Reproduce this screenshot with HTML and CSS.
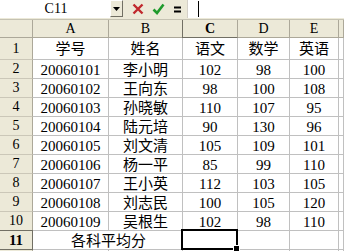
FILE: index.html
```html
<!DOCTYPE html>
<html lang="zh-CN">
<head>
<meta charset="utf-8">
<title>Excel</title>
<link rel="stylesheet" href="styles.css">
</head>
<body>
<div class="app">
  <div class="fbar">
    <div class="namebox">C11</div>
    <div class="dd"><svg width="7" height="4" viewBox="0 0 7 4"><path d="M0 0H7L3.5 4Z" fill="#000"/></svg></div>
    <div class="btns">
      <svg class="ico-x" width="12" height="12" viewBox="0 0 12 12"><path d="M1.5 1.5L10.5 10.5M10.5 1.5L1.5 10.5" stroke="#c0282d" stroke-width="2.4" fill="none"/></svg>
      <svg class="ico-ok" width="13" height="12" viewBox="0 0 13 12"><path d="M1.5 6.5L5 10L11.5 1.5" stroke="#1f9a2c" stroke-width="2.6" fill="none"/></svg>
      <svg class="ico-eq" width="7" height="7" viewBox="0 0 7 7"><rect x="0" y="0.5" width="7" height="2" fill="#000"/><rect x="0" y="4.5" width="7" height="2" fill="#000"/></svg>
    </div>
    <div class="finput"><span class="caret"></span></div>
  </div>
  <div class="sheet">
    <div class="h corner"></div><div class="h">A</div><div class="h">B</div><div class="h selcol">C</div><div class="h">D</div><div class="h">E</div><div class="h last"></div>

    <div class="rh">1</div><div class="c">学号</div><div class="c">姓名</div><div class="c">语文</div><div class="c">数学</div><div class="c">英语</div><div class="c"></div>
    <div class="rh">2</div><div class="c">20060101</div><div class="c">李小明</div><div class="c">102</div><div class="c">98</div><div class="c">100</div><div class="c"></div>
    <div class="rh">3</div><div class="c">20060102</div><div class="c">王向东</div><div class="c">98</div><div class="c">100</div><div class="c">108</div><div class="c"></div>
    <div class="rh">4</div><div class="c">20060103</div><div class="c">孙晓敏</div><div class="c">110</div><div class="c">107</div><div class="c">95</div><div class="c"></div>
    <div class="rh">5</div><div class="c">20060104</div><div class="c">陆元培</div><div class="c">90</div><div class="c">130</div><div class="c">96</div><div class="c"></div>
    <div class="rh">6</div><div class="c">20060105</div><div class="c">刘文清</div><div class="c">105</div><div class="c">109</div><div class="c">101</div><div class="c"></div>
    <div class="rh">7</div><div class="c">20060106</div><div class="c">杨一平</div><div class="c">85</div><div class="c">99</div><div class="c">110</div><div class="c"></div>
    <div class="rh">8</div><div class="c">20060107</div><div class="c">王小英</div><div class="c">112</div><div class="c">103</div><div class="c">105</div><div class="c"></div>
    <div class="rh">9</div><div class="c">20060108</div><div class="c">刘志民</div><div class="c">100</div><div class="c">105</div><div class="c">120</div><div class="c"></div>
    <div class="rh">10</div><div class="c">20060109</div><div class="c">吴根生</div><div class="c">102</div><div class="c">98</div><div class="c">110</div><div class="c"></div>
    <div class="rh selrow">11</div><div class="c merged">各科平均分</div><div class="c active"><span class="handle"></span></div><div class="c"></div><div class="c"></div><div class="c"></div>
    <div class="rh"></div><div class="c"></div><div class="c"></div><div class="c"></div><div class="c"></div><div class="c"></div><div class="c"></div>
  </div>
</div>
</body>
</html>
```
FILE: styles.css
```css
html, body {
  margin: 0;
  padding: 0;
  background: #ffffff;
}
body {
  font-family: "Liberation Serif", "Noto Sans CJK SC", serif;
  color: #000;
}
.app {
  width: 344px;
  height: 251px;
  overflow: hidden;
}
.fbar {
  display: flex;
  height: 19px;
  background: #ece9d8;
  box-sizing: border-box;
}
.namebox {
  width: 110px;
  height: 18px;
  background: #fff;
  font-size: 14px;
  line-height: 18px;
  text-align: center;
  box-sizing: border-box;
  padding-left: 2px;
}
.dd {
  width: 13px;
  height: 17px;
  box-sizing: border-box;
  background: #ece9d8;
  border-top: 1px solid #fff;
  border-left: 1px solid #fff;
  border-right: 1px solid #716f64;
  border-bottom: 1px solid #716f64;
  display: flex;
  align-items: center;
  justify-content: center;
}
.btns {
  width: 64px;
  display: flex;
  align-items: center;
  height: 18px;
}
.ico-x { margin-left: 9px; }
.ico-ok { margin-left: 8px; }
.ico-eq { margin-left: 9px; }
.finput {
  flex: 1;
  height: 18px;
  background: #fff;
  border-left: 1px solid #d4d0c8;
  position: relative;
}
.caret {
  position: absolute;
  left: 10px;
  top: 1px;
  width: 1px;
  height: 16px;
  background: #000;
}
.sheet {
  display: grid;
  grid-template-columns: 33px 76px 74px 55px 52px 49px 5px;
  grid-template-rows: 18px 22px repeat(9, 19px) 19px 19px;
  border-top: 1px solid #c5c2b2;
}
.sheet > div {
  box-sizing: border-box;
  border-right: 1px solid #c0c0c0;
  border-bottom: 1px solid #c0c0c0;
  display: flex;
  align-items: center;
  justify-content: center;
  overflow: hidden;
  white-space: nowrap;
}
.sheet > .h {
  background: #ece9d8;
  border-right-color: #aca899;
  border-bottom-color: #aca899;
  font-size: 14px;
  line-height: 16px;
}
.sheet > .rh {
  background: #ece9d8;
  border-right-color: #aca899;
  border-bottom-color: #cbc7b8;
  font-size: 14px;
  line-height: 16px;
}
.sheet > .selcol {
  font-weight: bold;
  border-left: 1px solid #716f64;
  border-bottom: 1px solid #716f64;
  margin-left: -1px;
}
.sheet > .selrow {
  font-weight: bold;
  font-size: 15px;
  border-top: 1px solid #716f64;
  border-right: 1px solid #716f64;
  border-bottom: 1px solid #716f64;
  margin-top: -1px;
}
.sheet > .c {
  font-size: 15px;
  line-height: 17px;
  padding-top: 2px;
}
.sheet > .merged {
  grid-column: span 2;
  justify-content: center;
  padding-left: 2px;
}
.sheet > .active {
  position: relative;
  overflow: visible;
}
.active::after {
  content: "";
  position: absolute;
  left: -2px;
  top: -2px;
  right: -1px;
  bottom: -1px;
  border: 2px solid #000;
}
.handle {
  position: absolute;
  right: -3px;
  bottom: -3px;
  width: 5px;
  height: 5px;
  background: #000;
  border: 1px solid #fff;
  z-index: 2;
}
```
